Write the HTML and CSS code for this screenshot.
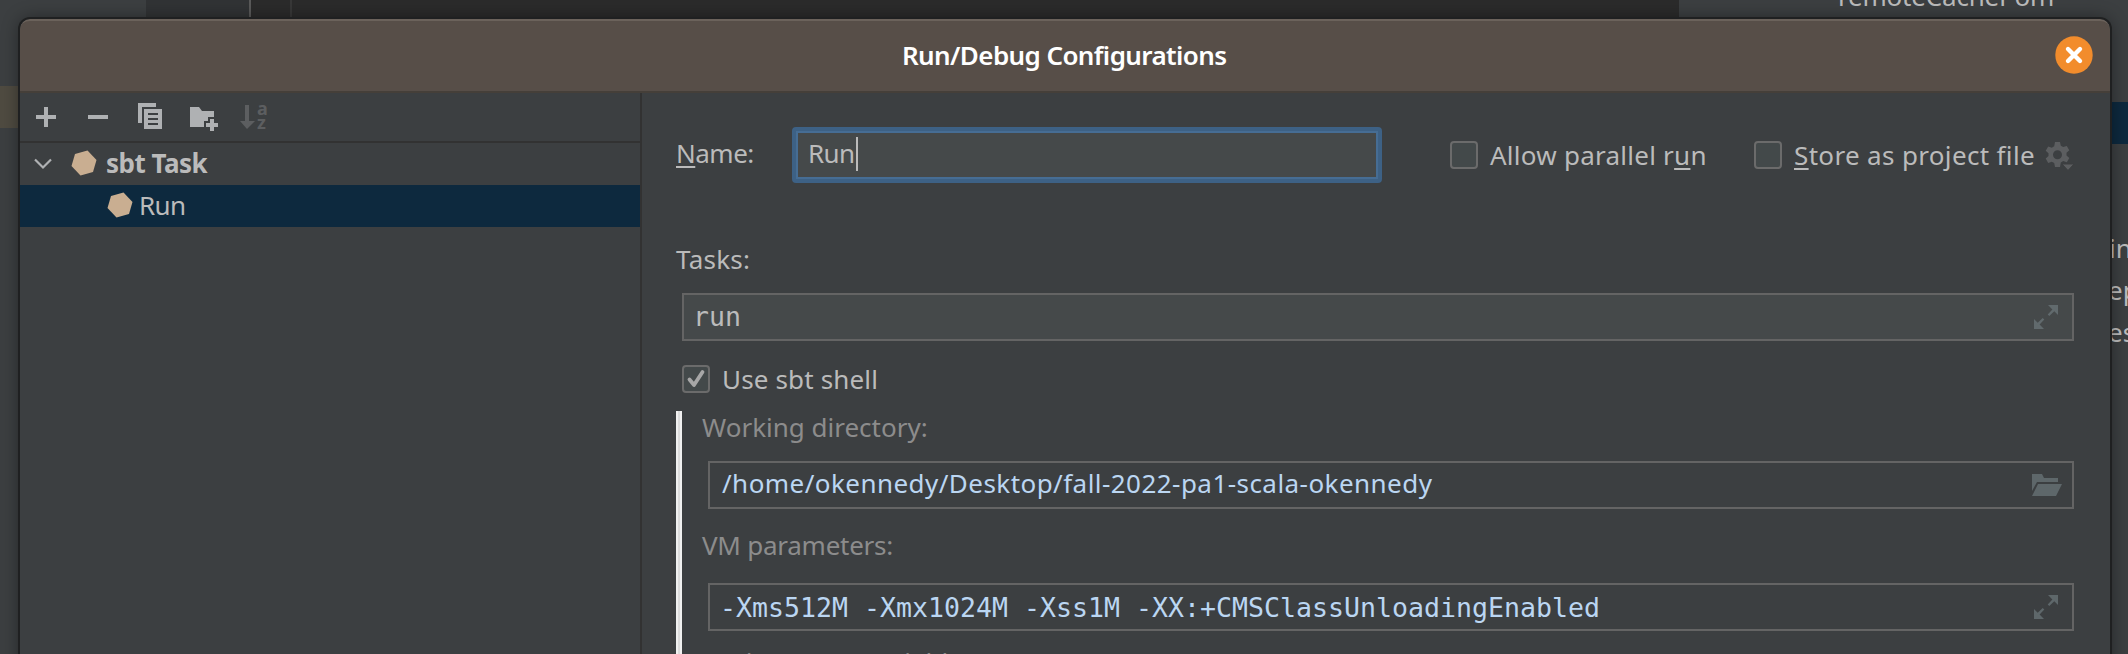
FILE: index.html
```
<!DOCTYPE html>
<html lang="en">
<head>
<meta charset="utf-8">
<title>Run/Debug Configurations</title>
<link rel="stylesheet" href="styles.css">
</head>
<body>
<div class="ide">
  <div class="ide-project"><div class="ide-mark"></div></div>
  <div class="ide-gutter"></div>
  <div class="ide-editor"></div>
  <div class="ide-tool">
    <span class="bg bg-top">remoteCachePom</span>
    <div class="bg-sel"></div>
    <span class="bg bg-a">in</span><span class="bg bg-b">ep</span><span class="bg bg-c">es</span>
  </div>
</div>
<main class="dialog">
  <header class="title"><h1><span class="t title-t">Run/Debug Configurations</span></h1>
    <svg class="close" viewBox="0 0 38 38"><circle cx="19" cy="19" r="18.7" fill="#f28c2c"/><path d="M13 13L25 25M25 13L13 25" stroke="#fff" stroke-width="4.4" stroke-linecap="round"/></svg>
  </header>
  <div class="body">
    <aside class="side">
      <div class="tools">
        <svg viewBox="0 0 32 32"><path d="M14 6h4v8h8v4h-8v8h-4v-8H6v-4h8z" fill="#afb1b3"/></svg>
        <svg viewBox="0 0 32 32"><path d="M6 14h20v4H6z" fill="#afb1b3"/></svg>
        <svg viewBox="0 0 32 32"><path fill="#afb1b3" fill-rule="evenodd" d="M4 2h18v4H8v16H4zM10 8h18v20H10zM14 12v2h10v-2zM14 17v2h10v-2zM14 22v2h10v-2z"/></svg>
        <svg viewBox="0 0 32 32"><path fill="#afb1b3" d="M4 6h9l3 4h12v6h-6v4h-4v6H4zM24 18h4v4h4v4h-4v4h-4v-4h-4v-4h4z"/></svg>
        <svg class="sort" viewBox="0 0 32 32"><path fill="#5c5e60" d="M5 4h4v16h6l-8 8-7-8h5z"/><text x="17" y="14" class="az">a</text><text x="17" y="28" class="az">z</text></svg>
      </div>
      <div class="row parent">
        <svg class="chev" viewBox="0 0 18 12"><path d="M1 1.5L9 9.5L17 1.5" fill="none" stroke="#afb1b3" stroke-width="2.2"/></svg>
        <svg class="hex" viewBox="0 0 26 26"><path d="M4 4L16.500 .5L25.500 10L22 22L9.500 25.500L.5 16z" fill="#c9ae91"/></svg>
        <span class="t sbt">sbt Task</span>
      </div>
      <div class="row child">
        <svg class="hex" viewBox="0 0 26 26"><path d="M4 4L16.500 .5L25.500 10L22 22L9.500 25.500L.5 16z" fill="#c9ae91"/></svg>
        <span class="t run">Run</span>
      </div>
    </aside>
    <section class="form">
      <div class="name-row">
        <span class="t name"><u>N</u>ame:</span>
        <div class="name-input"><span class="t run">Run</span><i class="caret"></i></div>
        <div class="box allow-box"></div><span class="t allow">Allow parallel r<u>u</u>n</span>
        <div class="box store-box"></div><span class="t store"><u>S</u>tore as project file</span>
        <svg class="gear" viewBox="0 0 30 30"><g fill="#5c5e60"><path fill-rule="evenodd" d="M10 1h5l.8 3.700 2.400 1.400 3.600-1.200 2.500 4.300-2.800 2.500v2.800l2.800 2.500-2.500 4.300-3.600-1.200-2.400 1.400L15 26h-5l-.8-3.900-2.400-1.400-3.600 1.200L.7 17.600l2.800-2.500v-2.800L.7 9.800l2.500-4.300 3.600 1.200 2.400-1.400zM12.500 9.200a4.500 4.500 0 1 0 0 9 4.500 4.500 0 1 0 0-9z"/><path d="M17 23h12l-6 6.500z" stroke="#3c3f41"/></g></svg>
      </div>
      <span class="t tasks">Tasks:</span>
      <div class="field filled"><span class="t m mrun">run</span>
        <svg class="expand" viewBox="0 0 24 24"><path d="M14 0h10v10l-3.700-3.700-5 4.700-1.600-1.600 4.700-5zM0 14l3.700 3.700 5-4.700 1.600 1.600-4.700 5L10 24H0z" fill="#616a6d"/></svg></div>
      <div class="shell-row">
        <div class="box"><svg viewBox="0 0 28 28"><path d="M7.500 14.500L12 20L20.500 7" fill="none" stroke="#a7a7a7" stroke-width="3.800" stroke-linecap="round" stroke-linejoin="round"/></svg></div>
        <span class="t use">Use sbt shell</span>
      </div>
      <div class="group">
        <span class="t dim wd">Working directory:</span>
        <div class="field path-f"><span class="t path">/home/okennedy/Desktop/fall-2022-pa1-scala-okennedy</span>
          <svg class="folder" viewBox="0 0 30 22"><path d="M0 0h10l2 4h14v4H5L0 17zM6 10h24l-6 12H0z" fill="#5e676a"/></svg></div>
        <span class="t dim vm">VM parameters:</span>
        <div class="field vm-f"><span class="t m vmp">-Xms512M -Xmx1024M -Xss1M -XX:+CMSClassUnloadingEnabled</span>
          <svg class="expand" viewBox="0 0 24 24"><path d="M14 0h10v10l-3.700-3.700-5 4.700-1.600-1.600 4.700-5zM0 14l3.700 3.700 5-4.700 1.600 1.600-4.700 5L10 24H0z" fill="#5e676a"/></svg></div>
        <span class="t dim env">Environment variables:</span>
      </div>
    </section>
  </div>
</main>
</body>
</html>
```
FILE: styles.css
```
* { box-sizing: border-box; }
body { margin: 0; width: 2128px; height: 654px; overflow: hidden; position: relative; background: #3c3f41; font-family: "Noto Sans", sans-serif; font-size: 26px; color: #bbb; }
svg { display: block; flex: none; }
.t, .bg { white-space: pre; line-height: 36px; height: 36px; display: block; flex: none; }
.ide { display: flex; height: 654px; }
.ide-project { width: 146px; padding-top: 86px; }
.ide-mark { height: 42px; background: #4f4b41; }
.ide-gutter { width: 105px; background: #313335; border-right: 2px solid #5a5a5a; }
.ide-editor { flex: 1; background: linear-gradient(90deg, transparent 39px, #383838 39px, #383838 41px, transparent 41px), #2b2b2b; }
.ide-tool { width: 449px; position: relative; }
.bg { position: absolute; }
.bg-top { left: 159px; top: -22px; letter-spacing: -.2px; }
.bg-sel { position: absolute; left: 0; right: 0; top: 102px; height: 42px; background: #0d293e; }
.bg-a { left: 430px; top: 230px; }
.bg-b { left: 429px; top: 272px; }
.bg-c { left: 429px; top: 314px; }
.dialog { position: absolute; left: 20px; top: 19px; width: 2090px; height: 660px; background: #3c3f41; border-radius: 10px 10px 0 0; overflow: hidden; box-shadow: 0 0 0 2px #1f2021, 0 0 18px rgba(0,0,0,.45); }
.title { height: 74px; background: #574e48; border-top: 2px solid #6b625b; border-bottom: 2px solid #453f39; border-radius: 10px 10px 0 0; display: flex; align-items: flex-start; justify-content: flex-end; padding: 15px 17px 0 0; }
h1 { margin: 1px auto 0 882px; font-size: 26px; font-weight: 600; color: #fff; letter-spacing: -.6px; }
.close { width: 38px; height: 38px; }
.body { display: flex; height: 586px; }
.side { width: 622px; flex: none; border-right: 2px solid #323232; }
.tools { height: 50px; border-bottom: 2px solid #323232; display: flex; gap: 20px; padding: 8px 0 0 10px; }
.tools svg { width: 32px; height: 32px; }
.tools .sort { overflow: visible; margin-left: 2px; }
.az { font: bold 18px "Noto Sans", sans-serif; fill: #5c5e60; }
.row { height: 42px; display: flex; align-items: center; }
.parent { padding-left: 14px; font-weight: bold; }
.chev { width: 18px; height: 12px; margin-right: 19px; }
.hex { width: 26px; height: 26px; margin-bottom: 3px; }
.sbt { margin: 0 0 2px 9px; letter-spacing: -.5px; }
.child { background: #0d293e; padding-left: 87px; }
.run { letter-spacing: -.6px; }
.child .run { margin: 0 0 3px 6px; }
.form { padding: 34px 36px 0 34px; flex: 1; min-width: 0; display: flex; flex-direction: column; }
u { text-decoration: underline; text-decoration-thickness: 2px; text-underline-offset: 3px; }
.name-row { display: flex; height: 56px; }
.name { margin-top: 8px; width: 116px; letter-spacing: -.5px; }
.name-input { width: 590px; height: 56px; flex: none; border: 4px solid #3d6185; border-radius: 4px; background: #45494a; box-shadow: inset 0 0 0 2px #466d94; display: flex; padding: 4px 0 0 12px; }
.caret { width: 2px; height: 34px; margin: 2px 0 0 1px; background: #bbb; }
.box { width: 28px; height: 28px; border: 2px solid #6b6b6b; border-radius: 4px; background: #43494a; flex: none; }
.box svg { width: 28px; height: 28px; margin: -2px; }
.allow-box { margin: 14px 12px 0 68px; }
.store-box { margin: 14px 12px 0 48px; }
.allow, .store { margin-top: 10px; }
.allow { width: 216px; letter-spacing: .25px; }
.store { width: 241px; letter-spacing: .34px; }
.gear { width: 30px; height: 30px; margin: 14px 0 0 10px; }
.tasks { margin: 58px 0 16px; letter-spacing: .25px; }
.field { height: 48px; border: 2px solid #646464; display: flex; align-items: center; justify-content: space-between; flex: none; }
.filled { background: #45494a; margin-left: 6px; padding: 0 14px 0 9px; }
.expand { width: 24px; height: 24px; }
.shell-row { display: flex; height: 70px; padding: 24px 0 0 6px; flex: none; }
.shell-row .use { margin: -4px 0 0 12px; letter-spacing: .15px; }
.group { flex: 1; padding-left: 26px; background: linear-gradient(90deg, #f0f0f0 2px, #dcdcdc 2px, #dcdcdc 4px, #f0f0f0 4px) 0 0 / 6px 100% no-repeat; }
.dim { color: #8c8c8c; }
.group .field { margin-left: 6px; color: #bbd6f2; padding: 0 14px 0 12px; }
.group .vm-f { padding-left: 10px; }
.group .path-f { padding-right: 10px; }
.path { letter-spacing: .45px; margin-bottom: 4px; }
.folder { width: 30px; height: 22px; }
.wd { position: relative; top: -2px; }
.path-f { margin-top: 14px; }
.vm { margin-top: 18px; letter-spacing: -.25px; }
.vm-f { margin-top: 20px; }
.vmp { margin-top: 1px; }
.env { margin-top: 13px; }
.m { font-family: "DejaVu Sans Mono", monospace; font-size: 26.580px; }
```
